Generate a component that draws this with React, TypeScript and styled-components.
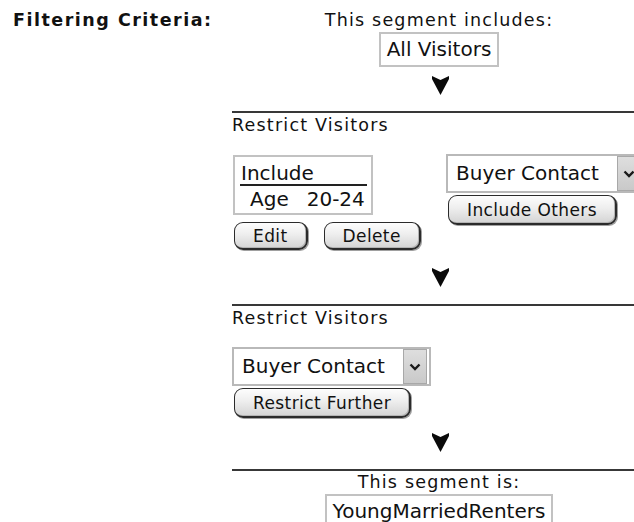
import React from "react";
import styled, { createGlobalStyle } from "styled-components";

const Global = createGlobalStyle`
  html, body { margin: 0; padding: 0; background: #fff; overflow: hidden; }
  body { font-family: "DejaVu Sans", Verdana, sans-serif; color: #111; }
`;

const Page = styled.div`
  display: flex;
  align-items: flex-start;
  padding-top: 10px;
  width: 660px;
`;

const SideLabel = styled.div`
  width: 232px;
  flex: none;
  box-sizing: border-box;
  padding-left: 13px;
  font-weight: bold;
  font-size: 17.5px;
  letter-spacing: 1.5px;
  line-height: 20px;
  color: #111;
`;

const Column = styled.div`
  width: 414px;
  flex: none;
  display: flex;
  flex-direction: column;
`;

const Caption = styled.div<{ $align?: string; $top?: number }>`
  margin-top: ${(p) => p.$top || 0}px;
  font-size: 17.5px;
  letter-spacing: 1.2px;
  line-height: 20px;
  text-align: ${(p) => p.$align || "center"};
  color: #111;
  white-space: nowrap;
`;

const ValueBox = styled.div`
  align-self: center;
  margin-top: 2px;
  border: 2px solid #c2c2c2;
  padding: 4px 6px;
  font-size: 20px;
  line-height: 23px;
  color: #111;
  white-space: nowrap;
`;

const Connector = styled.div<{ $top: number; $bottom: number }>`
  display: flex;
  justify-content: center;
  margin-top: ${(p) => p.$top}px;
  margin-bottom: ${(p) => p.$bottom}px;
  height: 18px;
  padding-left: 2px;
`;

const Rule = styled.div`
  height: 0;
  border-top: 2px solid #383838;
`;

const Section = styled.div`
  display: flex;
  flex-direction: column;
  padding-top: 2px;
`;

const Body = styled.div`
  margin-top: 19px;
  display: grid;
  grid-template-columns: 214px 1fr;
  align-items: start;
`;

const Cell = styled.div`
  display: flex;
  flex-direction: column;
  align-items: flex-start;
`;

const CriteriaBox = styled.div`
  margin-top: 1px;
  margin-left: 1px;
  width: 140px;
  height: 60px;
  box-sizing: border-box;
  border: 2px solid #c2c2c2;
  padding: 5px 4px 0 5px;
  font-size: 20px;
  line-height: 22px;
  color: #111;
`;

const CriteriaHead = styled.div`
  padding-left: 1px;
  border-bottom: 2px solid #222;
`;

const CriteriaRow = styled.div`
  display: flex;
  gap: 18px;
  padding-left: 10px;
  margin-top: 2px;
  white-space: nowrap;
`;

const ButtonRow = styled.div`
  display: flex;
  gap: 16px;
  margin-top: 7px;
  margin-left: 2px;
`;

const Button = styled.button<{ $h?: number; $ml?: number }>`
  height: ${(p) => p.$h || 29}px;
  margin: 2px 0 0 ${(p) => p.$ml || 0}px;
  padding: 0 18px;
  font-family: "DejaVu Sans", Verdana, sans-serif;
  font-size: 17px;
  letter-spacing: 0.4px;
  color: #111;
  background: linear-gradient(#fdfdfd, #eeeeee 45%, #d4d4d4);
  border: 1px solid #2b2b2b;
  border-bottom-width: 2px;
  border-right-width: 2px;
  border-radius: 9px;
  box-shadow: 1px 1px 0 #a0a0a0, inset -1px -1px 0 #b4b4b4;
  white-space: nowrap;
  cursor: pointer;
`;

const FirstButton = styled(Button)`
  margin-top: 0;
`;

const Select = styled.div<{ $w: number }>`
  width: ${(p) => p.$w}px;
  height: 39px;
  box-sizing: border-box;
  border: 2px solid #b9b9b9;
  display: flex;
  align-items: stretch;
  background: #fff;
  flex: none;
`;

const SelectText = styled.div`
  flex: 1;
  padding-left: 8px;
  font-size: 20px;
  line-height: 35px;
  color: #111;
  white-space: nowrap;
`;

const SelectArrow = styled.div`
  width: 24px;
  margin-right: 2px;
  box-sizing: border-box;
  border: 1px solid #a8a8a8;
  background: linear-gradient(#dedede, #c9c9c9);
  display: flex;
  align-items: center;
  justify-content: center;
`;

const Arrow = () => (
  <svg width="17" height="19" viewBox="0 0 17 19">
    <polygon points="0,0 8.5,4 17,0 17,3 8.5,19 0,3" fill="#0a0a0a" />
  </svg>
);

const Chevron = () => (
  <svg width="12" height="8" viewBox="0 0 12 8">
    <polyline points="1.5,1.5 6,6 10.5,1.5" fill="none" stroke="#1a1a1a" strokeWidth="2.4" />
  </svg>
);

const FakeSelect = ({ w }: { w: number }) => (
  <Select $w={w}>
    <SelectText>Buyer Contact</SelectText>
    <SelectArrow>
      <Chevron />
    </SelectArrow>
  </Select>
);

export default function App() {
  return (
    <>
      <Global />
      <Page>
        <SideLabel>Filtering Criteria:</SideLabel>
        <Column>
          <Caption>This segment includes:</Caption>
          <ValueBox>All Visitors</ValueBox>
          <Connector $top={9} $bottom={17}>
            <Arrow />
          </Connector>
          <Rule />
          <Section>
            <Caption $align="left">Restrict Visitors</Caption>
            <Body>
              <Cell>
                <CriteriaBox>
                  <CriteriaHead>Include</CriteriaHead>
                  <CriteriaRow>
                    <span>Age</span>
                    <span>20-24</span>
                  </CriteriaRow>
                </CriteriaBox>
                <ButtonRow>
                  <FirstButton $h={28}>Edit</FirstButton>
                  <FirstButton $h={28}>Delete</FirstButton>
                </ButtonRow>
              </Cell>
              <Cell>
                <FakeSelect w={199} />
                <Button $h={30} $ml={2}>Include Others</Button>
              </Cell>
            </Body>
          </Section>
          <Connector $top={18} $bottom={18}>
            <Arrow />
          </Connector>
          <Rule />
          <Section>
            <Caption $align="left">Restrict Visitors</Caption>
            <Body>
              <Cell>
                <FakeSelect w={199} />
                <Button $h={30} $ml={2}>Restrict Further</Button>
              </Cell>
            </Body>
          </Section>
          <Connector $top={15} $bottom={18}>
            <Arrow />
          </Connector>
          <Rule />
          <Caption $top={1}>This segment is:</Caption>
          <ValueBox>YoungMarriedRenters</ValueBox>
        </Column>
      </Page>
    </>
  );
}
